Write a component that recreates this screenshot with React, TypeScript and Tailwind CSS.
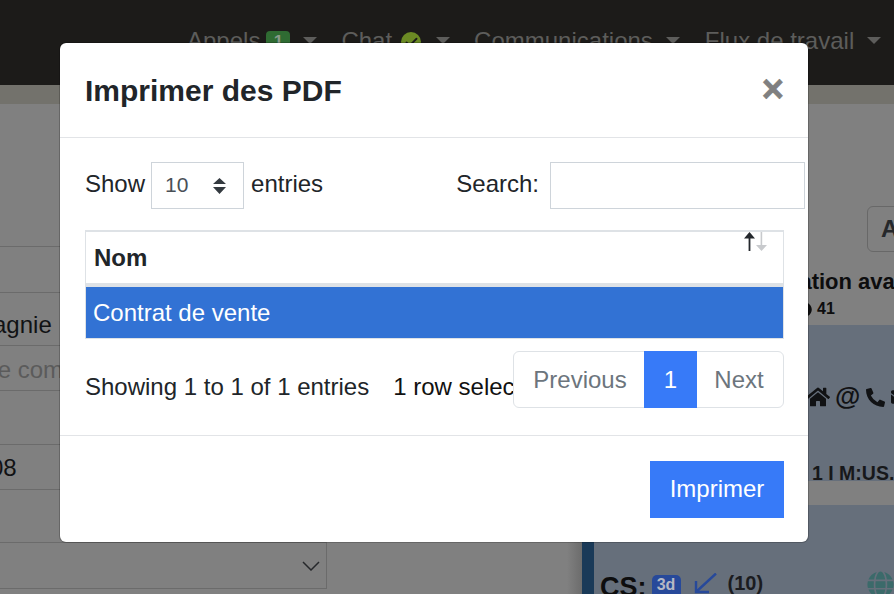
import { FaClock, FaEnvelope, FaGlobe, FaHome, FaPhoneAlt } from "react-icons/fa";
import { Check } from "lucide-react";

function Caret({ ml }: { ml: string }) {
  return (
    <span className={`${ml} mt-[11px] flex`}>
      <span className="w-0 h-0 border-x-[7.5px] border-x-transparent border-t-[7px] border-t-[#5d5d5b]" />
    </span>
  );
}

function Row({ h, children }: { h: string; children?: React.ReactNode }) {
  return <div className={`${h} border-t border-[#6b6b6b] flex items-center overflow-hidden whitespace-nowrap`}>{children}</div>;
}

function PageBehind() {
  return (
    <div className="h-[594px] w-[894px] overflow-hidden bg-[#808080] flex flex-col text-[24px] text-[#111214]">
      <nav className="h-[85px] shrink-0 bg-[#1c1b19] text-[#5d5d5b] flex items-start pt-[26px] pl-[187px] whitespace-nowrap leading-[30px]">
        <span>Appels</span>
        <span className="ml-[6px] mt-[5px] w-[24px] h-[22px] rounded-[4px] bg-[#2f6b32] text-[#8a9a8a] text-[17px] font-bold leading-[22px] text-center">1</span>
        <Caret ml="ml-[13px]" />
        <span className="ml-[24px]">Chat</span>
        <span className="ml-[9px] mt-[6px] w-[20px] h-[20px] rounded-full bg-[#6b8a24] flex items-center justify-center"><Check size={15} strokeWidth={3} className="text-[#1c1b19]" /></span>
        <Caret ml="ml-[15px]" />
        <span className="ml-[24px]">Communications</span>
        <Caret ml="ml-[13px]" />
        <span className="ml-[25px]">Flux de travail</span>
        <Caret ml="ml-[13px]" />
      </nav>
      <div className="h-[19px] shrink-0 bg-[#73726c]" />
      <main className="flex-1 flex min-h-0">
        <section className="w-[567px] shrink-0 pt-[142px]">
          <div className="w-[327px] border-r border-[#6b6b6b]">
            <Row h="h-[46px]" />
            <Row h="h-[53px]"><span className="-ml-[71px] mt-[11px]">Compagnie</span></Row>
            <Row h="h-[45px]"><span className="-ml-[73px] mt-[4px] text-[#5b5b5b]">Nom de compagnie</span></Row>
            <Row h="h-[54px]" />
            <Row h="h-[45px]"><span className="-ml-[10px] mt-[2px]">08</span></Row>
            <Row h="h-[53px]" />
            <div className="h-[47px] border-y border-[#6b6b6b] flex items-center justify-end pr-[6px]">
              <svg width="18" height="10" viewBox="0 0 18 10" fill="none" stroke="#26282b" strokeWidth="1.5"><path d="M1 1l8 8 8-8" /></svg>
            </div>
          </div>
        </section>
        <div className="w-[15px] shrink-0 bg-gradient-to-r from-[#808080] to-[#6c6c6c]" />
        <section className="w-[312px] shrink-0 flex flex-col overflow-hidden whitespace-nowrap font-bold text-[#0d0d0e]">
          <div className="h-[221px] shrink-0 pt-[102px]">
            <div className="ml-[285px] w-[60px] h-[46px] border border-[#686868] rounded-[6px] pl-[13px] leading-[44px] text-[#26282b]">A</div>
            <div className="pl-[149px] mt-[17px] text-[22px] leading-[26px]">Information available</div>
            <div className="pl-[215px] mt-[4px] text-[16px] leading-[20px] flex items-center gap-[5px]">
              <FaClock size={15} className="shrink-0" />
              <span>41</span>
            </div>
          </div>
          <div className="h-[156px] shrink-0 bg-[#666f7b] pt-[61px]">
            <div className="pl-[224px] h-[22px] flex items-center text-[#111214]">
              <FaHome size={24} className="shrink-0" />
              <span className="ml-[5px] shrink-0 text-[26px] font-bold leading-[22px] pb-[2px]">@</span>
              <FaPhoneAlt size={19} className="ml-[6px] shrink-0" />
              <FaEnvelope size={18} className="ml-[6px] shrink-0" />
            </div>
            <div className="pl-[230px] mt-[55px] text-[19.5px] leading-[20px] text-[#17181a]">1 I M:US.</div>
          </div>
          <div className="h-[24px] shrink-0" />
          <div className="flex-1 bg-[#666f7b] border-l-[12px] border-[#1a3a58] pl-[6px] pt-[65px] flex items-start">
            <span className="text-[27px] leading-[30px] mt-[2px]">CS:</span>
            <span className="ml-[5px] mt-[5px] w-[29px] h-[24px] rounded-[5px] bg-[#27499a] text-[#b4b8c4] text-[16px] leading-[20px] text-center shrink-0">3d</span>
            <svg className="ml-[13px] mt-[3px] shrink-0" width="24" height="24" viewBox="0 0 24 24" fill="none" stroke="#27499a" strokeWidth="2.4"><path d="M22 0.5L2 19M2 8v11h13" /></svg>
            <span className="ml-[10px] mt-[1px] text-[20px] leading-[24px] text-[#1b1c1f]">(10)</span>
            <FaGlobe size={27} className="ml-[104px] mt-[1px] shrink-0 text-[#3b6a6a]" />
          </div>
        </section>
      </main>
    </div>
  );
}

function PrintModal() {
  return (
    <div className="absolute left-[59px] top-[42px] w-[750px] h-[501px] bg-white rounded-[7px] border border-black/20 bg-clip-padding flex flex-col text-[24px] text-[#212529]">
      <header className="h-[95px] shrink-0 border-b border-[#e2e4e7] flex items-center justify-between pl-[25px] pr-[24px]">
        <h1 className="text-[30px] font-bold leading-[36px] mt-[1px]">Imprimer des PDF</h1>
        <span className="text-[#808080] text-[38px] font-bold leading-none -mt-[3px] [-webkit-text-stroke:0.7px_#808080]">×</span>
      </header>
      <div className="h-[298px] shrink-0 border-b border-[#e2e4e7] pt-[24px] pl-[25px] pr-[24px]">
        <div className="flex items-center h-[47px]">
          <span className="pb-[4px]">Show</span>
          <div className="ml-[6px] w-[93px] h-[47px] border border-[#ced4da] flex items-center justify-between pl-[13px] pr-[17px] text-[21px] text-[#495057]">
            <span className="pb-[2px]">10</span>
            <svg width="13" height="16" viewBox="0 0 13 16" fill="#343a40"><path d="M6.5 0L13 6H0zM0 9h13l-6.5 7z" /></svg>
          </div>
          <span className="ml-[7px] pb-[4px]">entries</span>
          <span className="ml-auto pb-[4px]">Search:</span>
          <input className="ml-[11px] w-[255px] h-[47px] -mr-[21px] border border-[#ced4da] shrink-0 bg-white" />
        </div>
        <div className="mt-[21px] border-x border-b border-t-2 border-[#dee2e6]">
          <table className="w-full border-separate border-spacing-0">
            <thead>
              <tr>
                <th className="relative h-[55px] border-b-4 border-[#dee2e6] pl-[8px] pt-[1px] text-left font-bold leading-none">
                  Nom
                  <svg className="absolute right-[16px] top-0" width="23" height="19" viewBox="0 0 23 19">
                    <path d="M4.6 5h1.8v14H4.6z M0 6.5L5.5 0 11 6.5z" fill="#24282d" />
                    <path d="M16.6 0h1.6v14h-1.6z M12 13h11l-5.5 6z" fill="#c8cacd" />
                  </svg>
                </th>
              </tr>
            </thead>
            <tbody>
              <tr>
                <td className="h-[51px] bg-[#3272d4] text-white pl-[7px] leading-none">Contrat de vente</td>
              </tr>
            </tbody>
          </table>
        </div>
        <div className="mt-[12px] flex items-center">
          <div className="flex-1 min-w-0 self-start overflow-hidden whitespace-nowrap pt-[18px]">
            Showing 1 to 1 of 1 entries<span className="ml-[24px] text-[#111]">1 row selected</span>
          </div>
          <div className="shrink-0 w-[271px] h-[57px] rounded-[6px] border border-[#dee2e6] flex text-[#6c757d]">
            <span className="w-[130px] pl-[2px] flex items-center justify-center">Previous</span>
            <span className="w-[53px] -my-px bg-[#377af8] text-white flex items-center justify-center">1</span>
            <span className="flex-1 pr-[2px] flex items-center justify-center">Next</span>
          </div>
        </div>
      </div>
      <footer className="flex-1 flex justify-end items-start pt-[25px] pr-[24px]">
        <button className="w-[134px] h-[57px] bg-[#377af8] text-white pb-[2px]">Imprimer</button>
      </footer>
    </div>
  );
}

export default function App() {
  return (
    <div className="relative h-[594px] w-[894px] overflow-hidden font-['Liberation_Sans',Arial,sans-serif]">
      <PageBehind />
      <PrintModal />
    </div>
  );
}
